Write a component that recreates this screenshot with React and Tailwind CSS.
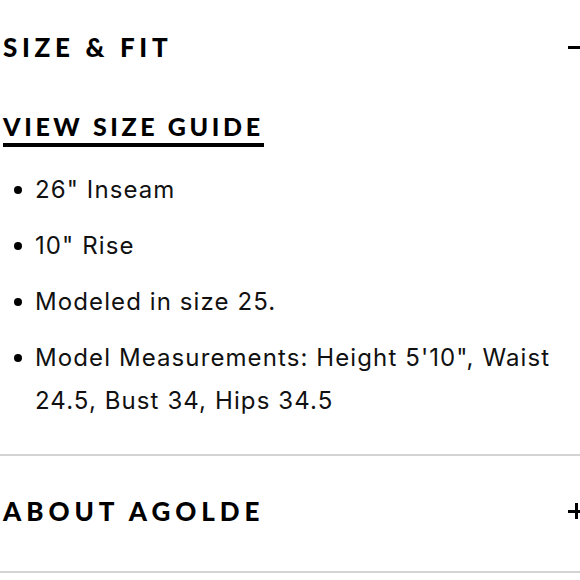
export default function App() {
  const items = [
    `26" Inseam`,
    `10" Rise`,
    `Modeled in size 25.`,
    `Model Measurements: Height 5'10", Waist 24.5, Bust 34, Hips 34.5`,
  ];
  const head = { fontFamily: "Lato, 'Liberation Sans', sans-serif" };
  const body = { fontFamily: "Inter, 'Liberation Sans', sans-serif" };
  return (
    <div className="w-[580px] h-[580px] overflow-hidden bg-white text-black">
      <div className="w-[584px] pl-[3px]">
        <div className="flex h-[94px] items-center justify-between">
          <span className="text-[26px] font-black tracking-[0.18em] leading-none" style={head}>
            SIZE &amp; FIT
          </span>
          <span className="block h-[3px] w-[16px] bg-black"></span>
        </div>
        <div className="mt-[17px]">
          <span
            className="inline-block border-b-4 border-black pb-[2px] text-[25px] font-black leading-[30px] tracking-[0.145em]"
            style={head}
          >
            VIEW SIZE GUIDE
          </span>
        </div>
        <ul className="mt-[21px] flex flex-col gap-[13px] pb-[32px] pr-[16px]" style={body}>
          {items.map((t) => (
            <li key={t} className="flex text-[24px] leading-[43px] tracking-[1.1px] text-[#111]">
              <span className="flex h-[43px] w-[32px] shrink-0 items-center">
                <span className="ml-[11px] block h-[8px] w-[8px] rounded-full bg-black"></span>
              </span>
              <span>{t}</span>
            </li>
          ))}
        </ul>
      </div>
      <div className="w-[584px] border-y-2 border-[#d4d4d4] pl-[3px]">
        <div className="flex h-[115px] items-center justify-between">
          <span className="mb-[5px] text-[26px] font-black tracking-[0.19em] leading-none" style={head}>
            ABOUT AGOLDE
          </span>
          <span className="relative mb-[5px] block h-[16px] w-[16px]">
            <span className="absolute left-0 top-[6.5px] block h-[3px] w-[16px] bg-black"></span>
            <span className="absolute left-[6.5px] top-0 block h-[16px] w-[3px] bg-black"></span>
          </span>
        </div>
      </div>
    </div>
  );
}
